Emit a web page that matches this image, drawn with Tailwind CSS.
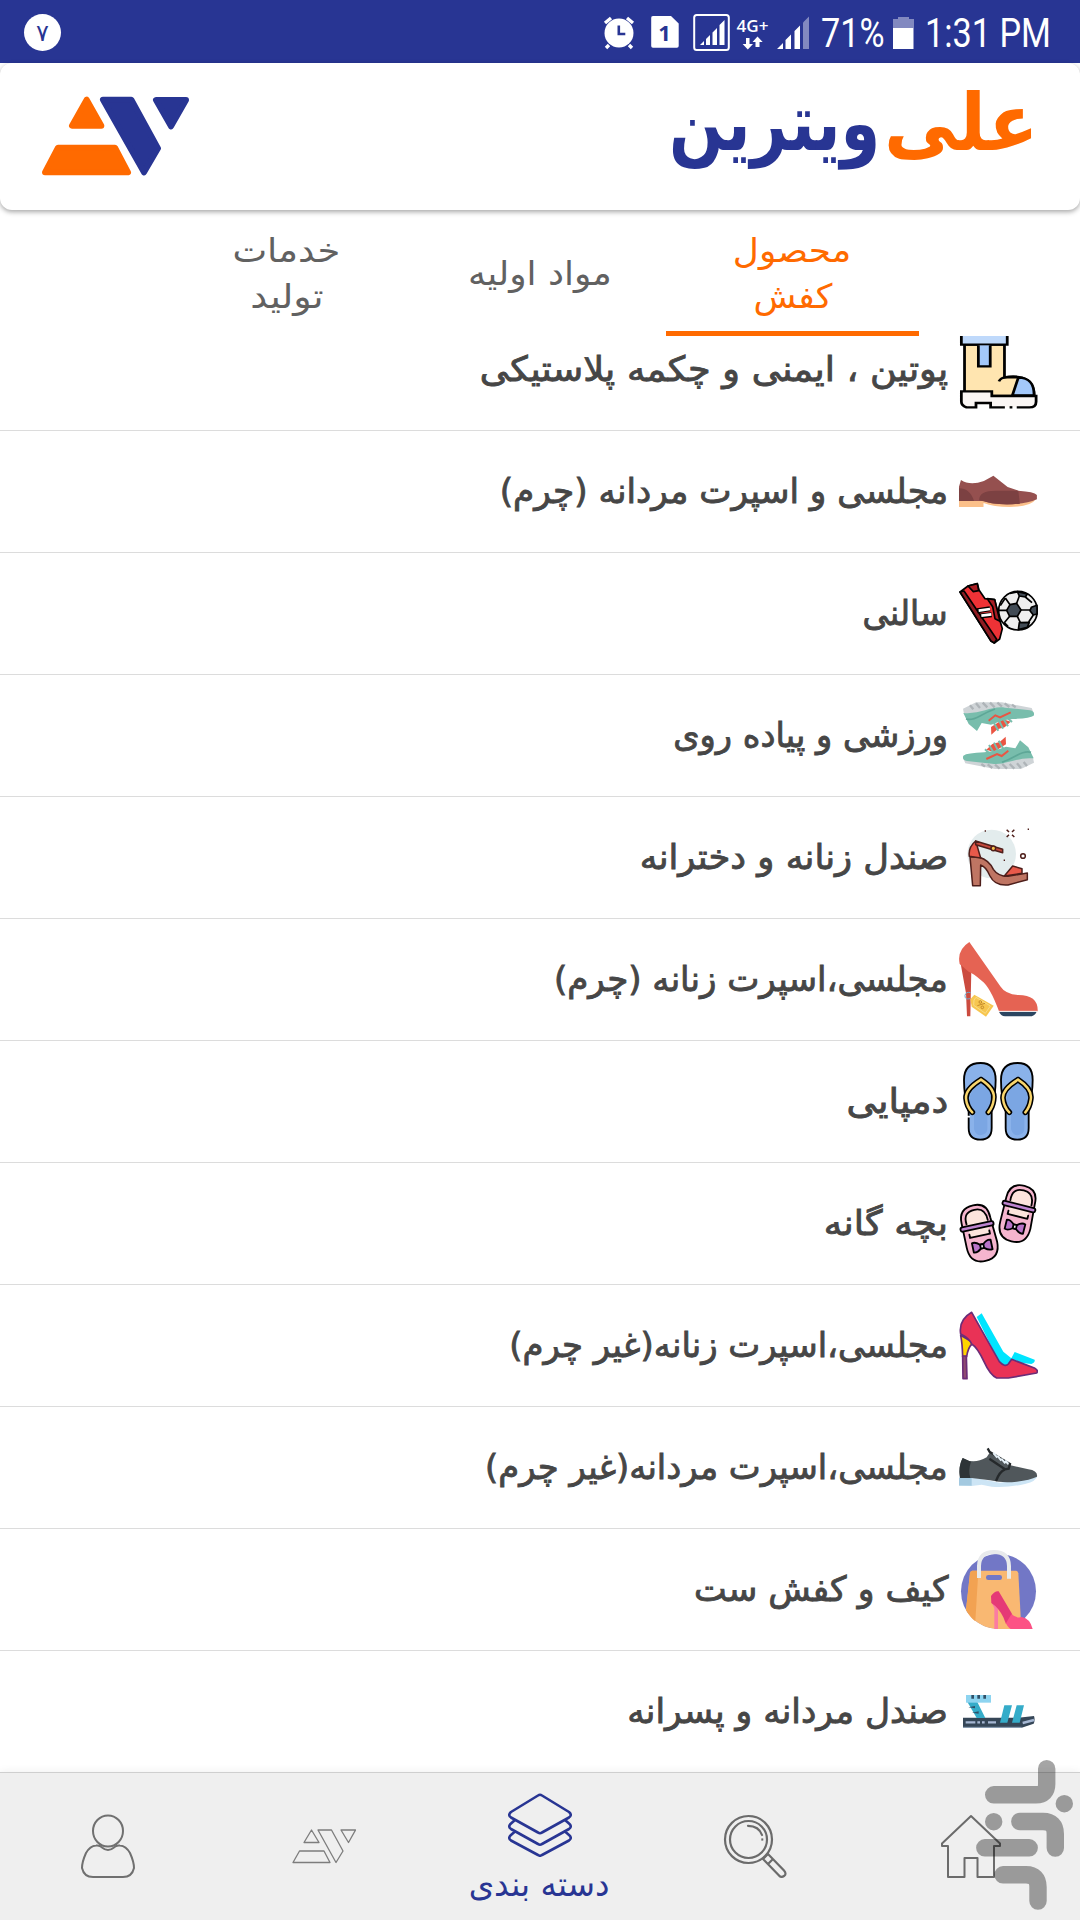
<!DOCTYPE html>
<html lang="fa" dir="rtl">
<head>
<meta charset="utf-8">
<title>علی ویترین</title>
<script src="https://cdn.jsdelivr.net/npm/@tailwindcss/browser@4"></script>
</head>
<body class="bg-white">
<div class="relative flex h-[1920px] w-[1080px] flex-col overflow-hidden bg-white font-['DejaVu_Sans',sans-serif] text-[32px] text-[#464646]">

  <!-- Status bar -->
  <div dir="ltr" class="flex h-[63px] shrink-0 items-center bg-[#283593] pt-[2px] pl-6 text-white">
    <div class="flex size-[37px] items-center justify-center rounded-full bg-white text-[24px] leading-none text-[#283593]">۷</div>
    <svg class="ml-[542px] h-[37px] w-[208px] shrink-0" viewBox="603 14 208 37" fill="#fff">
      <!-- alarm -->
      <circle cx="619" cy="33" r="14.5"/>
      <path d="M605 23l6-5M633 23l-6-5M609 45l-3 3M629 45l3 3" stroke="#fff" stroke-width="3.4"/>
      <path d="M618.800 25.500V34h6.500" fill="none" stroke="#283593" stroke-width="2.600"/>
      <!-- sim -->
      <path d="M653 16h18l7.700 7.500V46a1.800 1.800 0 0 1-1.800 1.800H653a1.800 1.800 0 0 1-1.800-1.800V18a1.800 1.800 0 0 1 1.800-2z"/>
      <text x="664.500" y="41" text-anchor="middle" font-family="Open Sans" font-weight="700" font-size="22" fill="#283593">1</text>
      <!-- boxed signal -->
      <rect x="694.200" y="15" width="34.600" height="35" rx="2.500" fill="none" stroke="#fff" stroke-width="2"/>
      <path d="M700 45l4-4v4zM706 39l4-4v10h-4zM712.500 32.500l4.500-4.500v17h-4.500zM719.500 25l5-5v25h-5z"/>
      <text x="736.500" y="31.500" textLength="32" lengthAdjust="spacingAndGlyphs" font-family="Open Sans" font-weight="600" font-size="16.500">4G+</text>
      <path d="M746 38h3.500v6h3.500l-5.200 5.500-5.200-5.500h3.400zM755.500 47h4v-5h3.200L757.500 36.500 752.500 42h3z"/>
      <path d="M777 49l6-6v6zM785.500 40l5.500-5.500V49h-5.500zM794.500 31l5.500-5.500V49h-5.500z"/>
      <path d="M803 22.500l6-6V49h-6z" opacity=".42"/>
    </svg>
    <span class="ml-[10px] w-[74px] origin-left scale-x-[.855] pt-[3px] font-[Roboto] text-[40px] leading-none whitespace-nowrap">71%</span>
    <svg class="-ml-[2px] h-8 w-[21px] shrink-0" viewBox="0 0 21 32" fill="#fff">
      <path d="M5 0h11v2h5v9H0V2h5z" opacity=".42"/><path d="M0 11h20.500v21H0z"/>
    </svg>
    <span class="ml-[11px] origin-left scale-x-[.855] pt-[3px] font-[Roboto] text-[40px] leading-none whitespace-nowrap">1:31 PM</span>
  </div>

  <!-- Brand header -->
  <header class="flex h-[147px] shrink-0 items-start justify-between rounded-xl bg-white pr-[42px] pl-[42px] shadow-[0_2px_5px_rgba(0,0,0,.35)]">
    <svg class="h-[147px] w-[370px] shrink-0" viewBox="668 63 370 147" font-family="DejaVu Sans" font-size="79" font-weight="700" direction="ltr">
      <text transform="translate(884 150) scale(.93 1)" fill="#ff6a00">علی</text>
      <text transform="translate(669 150) scale(.81 1)" fill="#283593">ویترین</text>
    </svg>
    <svg class="mt-[33px] h-20 w-[148px]" viewBox="126 289 444 240" stroke-linejoin="round" stroke-width="18">
      <g fill="#ff6a00" stroke="#ff6a00"><path d="M260 300L216 378H304Z"/><path d="M174 444H345L384 518H135Z"/></g>
      <g fill="#283593" stroke="#283593"><path d="M309 300H394L474 446 432 518Z"/><path d="M468 301H558L513 380Z"/></g>
    </svg>
  </header>

  <!-- Tabs -->
  <div class="flex h-[126px] shrink-0 justify-center pr-[1px] text-[31px] leading-[46px] text-[#616161]">
    <div class="flex w-[253px] flex-col items-center justify-center border-b-[5px] border-[#ff6a00] pt-[4px] text-[#ff6a00]"><span class="scale-x-[1.16] scale-y-[1.08]">محصول</span><span class="scale-x-[1.13] scale-y-[1.08]">کفش</span></div>
    <div class="flex w-[253px] items-center justify-center"><span class="scale-x-[1.16] scale-y-[1.08]">مواد اولیه</span></div>
    <div class="flex w-[253px] flex-col items-center justify-center"><span class="scale-x-[1.19] scale-y-[1.08]">خدمات</span><span class="scale-x-[1.23] scale-y-[1.08]">تولید</span></div>
  </div>

  <!-- Categories -->
  <main class="min-h-0 flex-1 overflow-hidden">
    <ul class="-mt-[27px] [-webkit-text-stroke:.8px_#464646]">
      <li class="flex h-[122px] items-center gap-[10px] border-b border-[#dcdcdc] pr-[42px] pb-px">
        <svg class="size-20" viewBox="1259.5 27 202.3 240" preserveAspectRatio="none" stroke="#000" stroke-width="7">
          <path d="M1276 74H1377V172C1395 168 1452 160 1452 228H1276Z" fill="#ffe5b0"/>
          <path d="M1412 173C1440 173 1452 190 1452 226H1397Z" fill="#a3c8fa"/>
          <path d="M1363 184Q1368 172 1381 172H1412" fill="none"/>
          <path d="M1268 30H1384V74H1268Z" fill="#bfd9fb"/><path d="M1311 76V139H1341V76" fill="#a3c8fa"/>
          <path d="M1378 262H1342V249H1305V262H1281Q1268 256 1268 245V214H1345V228H1457V245Q1457 262 1440 262H1408" fill="#faf6f4"/>
          <path d="M1390 262h7"/>
        </svg>
        <span class="origin-right scale-x-[1.145] scale-y-[1.08] whitespace-nowrap">پوتین ، ایمنی و چکمه پلاستیکی</span>
      </li>
      <li class="flex h-[122px] items-center gap-[10px] border-b border-[#dcdcdc] pr-[42px] pb-px">
        <svg class="size-20" viewBox="1259.5 393 202.3 240" preserveAspectRatio="none">
          <path d="M1262 541L1324 538 1345 546 1457 536Q1445 560 1390 561 1350 561 1324 549V561H1262Z" fill="#fbc08a"/>
          <path d="M1267 480Q1290 498 1325 483L1349 467 1385 501 1412 512Q1452 515 1459 525V538Q1430 553 1380 553 1345 553 1325 543H1262V500Z" fill="#95504f"/>
          <path d="M1262 505Q1290 505 1300 543H1262ZM1313 541Q1312 512 1355 512H1412L1416 551Q1380 556 1345 550Z" fill="#7c4142"/>
        </svg>
        <span class="origin-right scale-x-[1.07] scale-y-[1.08] whitespace-nowrap">مجلسی و اسپرت مردانه (چرم)</span>
      </li>
      <li class="flex h-[122px] items-center gap-[10px] border-b border-[#dcdcdc] pr-[42px] pb-px">
        <svg class="size-20" viewBox="54 39 240 240" stroke="#000" stroke-width="5" stroke-linejoin="round">
          <circle cx="234" cy="152" r="58" fill="#eee"/>
          <path d="M210 134L230 130 243 150 232 169 209 169 200 151ZM232 95L262 102 256 111 238 108ZM274 142L291 136V162L280 165 270 152ZM238 188L268 187 262 202 235 209Z" fill="#414b55"/>
          <path d="M210 134L196 114M230 130L238 108M243 150H270M232 169L241 188M209 169L193 188M200 151H177M256 111L276 128M280 165L266 186M210 100L232 96M193 188L204 199M181 137L196 114" fill="none"/>
          <path d="M60 96L84 78 112 71 117 90 135 116 164 119 180 182 187 206 179 237 163 249 153 243Z" fill="#ee3236"/>
          <path d="M84 78L112 71 116 92 100 95ZM142 116L164 119 180 184 165 176 158 140Z" fill="#a81d23"/>
          <path d="M60 96L72 93 170 238 163 249 153 243Z" fill="#8f1c22"/>
          <path d="M112 152L150 146M121 168L155 164" stroke="#000" stroke-width="15"/><path d="M116 152L150 147M124 167L154 163" stroke="#fff" stroke-width="8"/>
        </svg>
        <span class="origin-right scale-x-[1.03] scale-y-[1.08] whitespace-nowrap">سالنی</span>
      </li>
      <li class="flex h-[122px] items-center gap-[10px] border-b border-[#dcdcdc] pr-[42px] pb-px">
        <svg class="size-20" viewBox="54 405 240 240">
          <g id="runner">
            <path d="M69 446L108 427H186L275 444 282 461 210 463 72 461Z" fill="#cfd4d7"/>
            <path d="M90 436l10 12M108 430l12 14M128 428l14 14M150 428l14 14M172 428l14 12M194 430l14 11M216 434l11 8" stroke="#aeb4b8" stroke-width="7"/>
            <path d="M153 501L190 478 212 485 194 502 172 508 154 524Z" fill="#ea5543"/>
            <path d="M70 459C120 464 155 437 195 443L270 451Q286 455 281 467 270 475 218 477L190 481 153 494 125 489 111 513 86 492Z" fill="#78bdac"/>
            <path d="M78 477Q95 482 120 468T165 447" fill="none" stroke="#5ea797" stroke-width="5"/>
            <path d="M146 482L166 466 180 472 212 457" fill="none" stroke="#ea5543" stroke-width="6"/>
            <path d="M162 489l13 23M177 482l12 24M191 478l13 21M205 476l11 10" stroke="#78bdac" stroke-width="6"/>
          </g>
          <use href="#runner" transform="rotate(180 175.500 527)"/>
        </svg>
        <span class="origin-right scale-x-[1.053] scale-y-[1.08] whitespace-nowrap">ورزشی و پیاده روی</span>
      </li>
      <li class="flex h-[122px] items-center gap-[10px] border-b border-[#dcdcdc] pr-[42px] pb-px">
        <svg class="size-20" viewBox="54 51 240 240" stroke="#4e1f1b" stroke-width="4.500" stroke-linejoin="round">
          <circle cx="155" cy="162" r="73" fill="#e3eced" stroke="none"/>
          <path d="M90 170L118 172Q146 180 160 208 174 229 204 229L262 219V239L204 255Q164 258 150 228 138 200 122 195L121 257H98Z" fill="#bf7563"/>
          <path d="M107 123Q84 142 88 169L122 174ZM193 228L218 198 246 206V220Z" fill="#e8594a"/>
          <path d="M107 123L188 148V158L107 134Z" fill="#c4483c"/><circle cx="160" cy="145" r="7" fill="#f8c44d"/>
          <circle cx="249" cy="168" r="7" fill="#fff"/>
          <path d="M200 89l7 7M223 89l-7 7M200 111l7-7M223 111l-7-7M134 93h4M191 181h4M263 88h4" fill="none"/>
        </svg>
        <span class="origin-right scale-x-[1.105] scale-y-[1.08] whitespace-nowrap">صندل زنانه و دخترانه</span>
      </li>
      <li class="flex h-[122px] items-center gap-[10px] border-b border-[#dcdcdc] pr-[42px] pb-px">
        <svg class="size-20" viewBox="54 417 240 240">
          <path d="M60 480L94 510 91 649H81L78 580Z" fill="#cb4b3f"/>
          <path d="M88 426L182 560Q196 582 235 585 295 585 293 634H177Q150 560 125 542 100 520 86 515L59 492Q50 450 88 426Z" fill="#e56353"/>
          <path d="M177 635H290Q284 649 268 649H195Q182 647 177 635Z" fill="#2b4560"/>
          <path d="M177 634H292" stroke="#fff" stroke-width="2.500"/>
          <path d="M90 596Q74 600 75 586 78 574 92 578" fill="none" stroke="#72a7c9" stroke-width="3"/>
          <path d="M91 598L103 584 161 617 138 650 95 620Z" fill="#f7c64f"/>
          <path d="M102 600L108 592 151 618 136 640 101 616Z" fill="none" stroke="#f9dc86" stroke-width="3"/>
          <path d="M112 617L135 610" stroke="#c58b2b" stroke-width="3"/><circle cx="121" cy="606" r="4" fill="none" stroke="#c58b2b" stroke-width="3"/><circle cx="127" cy="622" r="4" fill="none" stroke="#c58b2b" stroke-width="3"/>
        </svg>
        <span class="origin-right scale-x-[1.065] scale-y-[1.08] whitespace-nowrap">مجلسی،اسپرت زنانه (چرم)</span>
      </li>
      <li class="flex h-[122px] items-center gap-[10px] border-b border-[#dcdcdc] pr-[42px] pb-px">
        <svg class="size-20" viewBox="54 63 240 240" stroke="#000" stroke-width="5.500" stroke-linecap="round" stroke-linejoin="round">
          <g id="flip">
            <path d="M72 120Q72 69 122 69 167 69 167 120 167 160 155 200V264Q155 299 121 299 86 299 86 264V215Q72 170 72 120Z" fill="#8ab2ea"/>
            <path d="M123 128Q90 150 88 180 90 200 102 214V268Q108 286 121 286 140 284 142 268V214Q160 195 157 165 152 145 123 128Z" fill="#7ba6e3" stroke="none"/>
            <path d="M123 119Q76 148 78 175 80 200 97 217M123 119Q168 148 161 180 158 202 145 217" fill="none" stroke-width="17"/>
            <path d="M123 119Q76 148 78 175 80 200 97 217M123 119Q168 148 161 180 158 202 145 217" fill="none" stroke="#f9d66d" stroke-width="7.500"/>
          </g>
          <use href="#flip" x="111"/>
          <path d="M82 230h6" stroke="#fff" stroke-width="5"/>
        </svg>
        <span class="origin-right scale-x-[1.18] scale-y-[1.08] whitespace-nowrap">دمپایی</span>
      </li>
      <li class="flex h-[122px] items-center gap-[10px] border-b border-[#dcdcdc] pr-[42px] pb-px">
        <svg class="size-20 overflow-visible" viewBox="54 429 240 240" stroke="#000" stroke-width="5.500" stroke-linecap="round" stroke-linejoin="round">
          <g id="clog" transform="rotate(-12 117 580)">
            <path d="M72 540Q72 494 117 494 160 494 160 540L165 615Q165 665 119 665 72 665 72 615Z" fill="#f5b5ce"/>
            <path d="M88 548Q82 508 118 508 151 508 149 548L148 588H88Z" fill="#fce4dc" stroke="none"/>
            <path d="M86 546Q82 508 118 508 151 508 151 546" fill="none"/>
            <path d="M88 578V588H149V578" fill="none"/>
            <rect x="65" y="552" width="101" height="13" rx="6" fill="#bd83cf"/>
            <path d="M90 605Q100 602 113 614H123Q136 602 147 606V635Q136 637 123 626H113Q100 637 90 633Z" fill="#b873c8"/>
            <path d="M113 614v12h10v-12z" fill="#fff"/>
          </g>
          <use href="#clog" transform="translate(116 -59) rotate(26 117 580)"/>
        </svg>
        <span class="origin-right scale-x-[1.15] scale-y-[1.08] whitespace-nowrap">بچه گانه</span>
      </li>
      <li class="flex h-[122px] items-center gap-[10px] border-b border-[#dcdcdc] pr-[42px] pb-px">
        <svg class="size-20" viewBox="54 45 240 240" stroke="#6c2c78" stroke-width="5" stroke-linejoin="round">
          <path d="M110 81L125 70 190 185 214 205 224 186 284 209Q286 218 274 222L218 216 200 230 180 222Z" fill="#00e5ff" stroke="none"/>
          <path d="M62 136L90 152 96 162Q84 172 80 200H68Q67 160 62 136Z" fill="#ffd500"/>
          <path d="M68 198H79L81 266H69Z" fill="#8e4a70"/>
          <path d="M95 67L178 215Q195 233 205 222L215 208 285 235Q296 242 290 249L205 264H170Q150 255 132 215 112 172 95 162 88 145 62 132 55 90 95 67Z" fill="#e93256"/>
        </svg>
        <span class="origin-right scale-x-[1.06] scale-y-[1.08] whitespace-nowrap">مجلسی،اسپرت زنانه(غیر چرم)</span>
      </li>
      <li class="flex h-[122px] items-center gap-[10px] border-b border-[#dcdcdc] pr-[42px] pb-px">
        <svg class="size-20" viewBox="54 411 240 240">
          <path d="M57 563L95 562 180 578 292 558Q290 573 255 582 200 594 155 590L125 584 95 588 57 586Z" fill="#cde5f5"/><path d="M57 563H95V587H57Z" fill="#a3c9e0"/>
          <path d="M68 504Q100 525 140 502L152 484 205 524 265 538Q294 542 291 560 270 570 230 575 190 580 150 571L95 564 60 563Q54 530 68 504Z" fill="#50575b"/>
          <path d="M68 504L93 515Q84 540 91 564H60Q54 530 68 504Z" fill="#2e3437"/>
          <path d="M143 475L149 486 210 522 206 536 195 538 148 506M195 538Q178 545 168 573" fill="none" stroke="#25292b" stroke-width="7"/>
          <path d="M160 489l12 14M172 497l12 15M184 506l12 14M196 511l9 11" stroke="#e6f1f8" stroke-width="6"/>
        </svg>
        <span class="origin-right scale-x-[1.057] scale-y-[1.08] whitespace-nowrap">مجلسی،اسپرت مردانه(غیر چرم)</span>
      </li>
      <li class="flex h-[122px] items-center gap-[10px] border-b border-[#dcdcdc] pr-[42px] pb-px">
        <svg class="size-20" viewBox="54 57 240 240">
          <circle cx="175.500" cy="184" r="112.500" fill="#7277c6"/>
          <path d="M97 122H227Q234 122 235 130L244 297H170Q110 292 78 240L90 130Q91 122 97 122Z" fill="#f9b872"/>
          <path d="M97 122H115L106 274Q90 262 78 240L90 130Q91 122 97 122Z" fill="#f2a252"/>
          <rect x="138" y="135" width="48" height="15" rx="7" fill="#7277c6"/>
          <path d="M117 144V108Q118 66 162 66 206 66 207 108V146" fill="none" stroke="#e8eaec" stroke-width="12"/>
          <path d="M154 215L163 235V297H174V240L172 225Z" fill="#fb7ca2"/>
          <path d="M153 198Q164 182 176 184L215 250Q225 262 198 282L190 262Q176 233 154 219Z" fill="#e53a76"/>
          <path d="M198 280L214 253Q232 266 245 261 270 265 278 297H212Q202 292 192 268Z" fill="#fc5285"/>
        </svg>
        <span class="origin-right scale-x-[1.085] scale-y-[1.08] whitespace-nowrap">کیف و کفش ست</span>
      </li>
      <li class="flex h-[122px] items-center gap-[10px] pr-[42px] pb-[2px]">
        <svg class="size-20" viewBox="54 423 240 240">
          <path d="M69 563H235L282 558Q286 570 281 581L245 593H69Z" fill="#354657"/>
          <path d="M69 592H245" fill="none" stroke="#8fa3b8" stroke-width="3"/>
          <path d="M77 577H106M112 577h8M126 577h8M144 577H168M248 579L282 570" stroke="#a6b7d3" stroke-width="7"/>
          <path d="M81 514L110 512 136 564H110Z" fill="#35acc9"/>
          <path d="M78 495H153V518H78Z" fill="#8dd4f0"/><path d="M94 495h8v11h-8zM112 495h8v11h-8zM130 495h8v11h-8zM85 532l20-4v7zM96 548l20-4v7z" fill="#2f5068"/>
          <path d="M193 526H216L202 578H180ZM230 526H252L239 578H216Z" fill="#35acc9"/>
        </svg>
        <span class="origin-right scale-x-[1.08] scale-y-[1.08] whitespace-nowrap">صندل مردانه و پسرانه</span>
      </li>
    </ul>
  </main>

  <!-- Bottom navigation -->
  <nav class="grid h-[148px] shrink-0 grid-cols-5 place-items-center border-t border-[#cfcfcf] bg-[#efefef] pr-[1px] pb-px shadow-[0_-1px_8px_rgba(0,0,0,.06)]">
    <svg class="size-16" viewBox="0 0 64 64" fill="none" stroke="#6b6b6b" stroke-width="2" stroke-linejoin="round"><path d="M32 2L61 29.500V32H55V63H38.500V44H25.500V63H9V32H3V29.500Z"/></svg>
    <svg class="size-16" viewBox="0 0 64 64" fill="none" stroke="#6b6b6b" stroke-width="2.200">
      <circle cx="25.500" cy="25.500" r="23.500"/><circle cx="25.500" cy="25.500" r="18.500"/><path d="M25 11.800Q36 12 39 21" stroke-linecap="round"/><path d="M38.300 25.500h2"/>
      <path d="M40 45l5-5L61 56.500Q64 60 61 62T56 61.500ZM45 50l5-5"/>
    </svg>
    <div class="flex flex-col items-center pt-[5px] text-[#283593]">
      <svg class="size-16" viewBox="0 0 64 64" fill="none" stroke="#283593" stroke-width="2.600" stroke-linejoin="round">
        <path d="M30 2.500Q32 1 34 2.500L61 19Q64.500 22 61 24.500L34 39.500Q32 41 30 39.500L3 24.500Q-.500 22 3 19Z"/>
        <path d="M7 27L3 30.500Q-.500 33.500 3 36L30 51Q32 52.500 34 51L61 36Q64.500 33.500 61 30.500L57 27M7 38.500L3 42Q-.500 45 3 47.500L30 62Q32 63.500 34 62L61 47.500Q64.500 45 61 42L57 38.500"/>
      </svg>
      <span class="mt-[7px] scale-x-[1.05] scale-y-[1.08] text-[31px] leading-[40px] whitespace-nowrap">دسته بندی</span>
    </div>
    <svg class="size-16" viewBox="0 0 64 64" fill="none" stroke="#7d7d7d" stroke-width="1.300" stroke-linejoin="round"><path d="M19.500 16L12 28.500H27ZM7.500 37H32L38 48.500H1ZM26 16H39.500L51 37 44 48.500ZM49 16H63.500L56.500 28.500Z"/></svg>
    <svg class="size-16" viewBox="0 0 64 64" fill="none" stroke="#707070" stroke-width="2"><ellipse cx="32" cy="17" rx="15" ry="15.500"/><path d="M20 31.500Q24 31 26 33.500 32 38.500 38 33.500 40 31 44 31.500 50 32 54 39 58 48 58 54 56 63 47 63H17Q8 63 6 54 6 48 10 39 14 32 20 31.500Z"/></svg>
  </nav>

  <!-- Store watermark -->
  <svg class="absolute top-[1758px] left-[974px] h-[154px] w-[101px]" viewBox="974 1758 101 154" fill="none">
    <g opacity=".35" stroke="#000" stroke-width="17.400" stroke-linecap="round">
      <path d="M1046.700 1768.700V1784Q1046.700 1794.800 1036 1794.800H993.700M1019.800 1821.500H1043Q1055.300 1821.500 1055.300 1834V1848M984.800 1847.800H1029.200M1003 1874.800H1026Q1038 1874.800 1038 1887V1901"/>
      <path d="M1064.300 1803.700h.01M993.700 1821.700h.01"/>
    </g>
  </svg>
</div>
</body>
</html>
